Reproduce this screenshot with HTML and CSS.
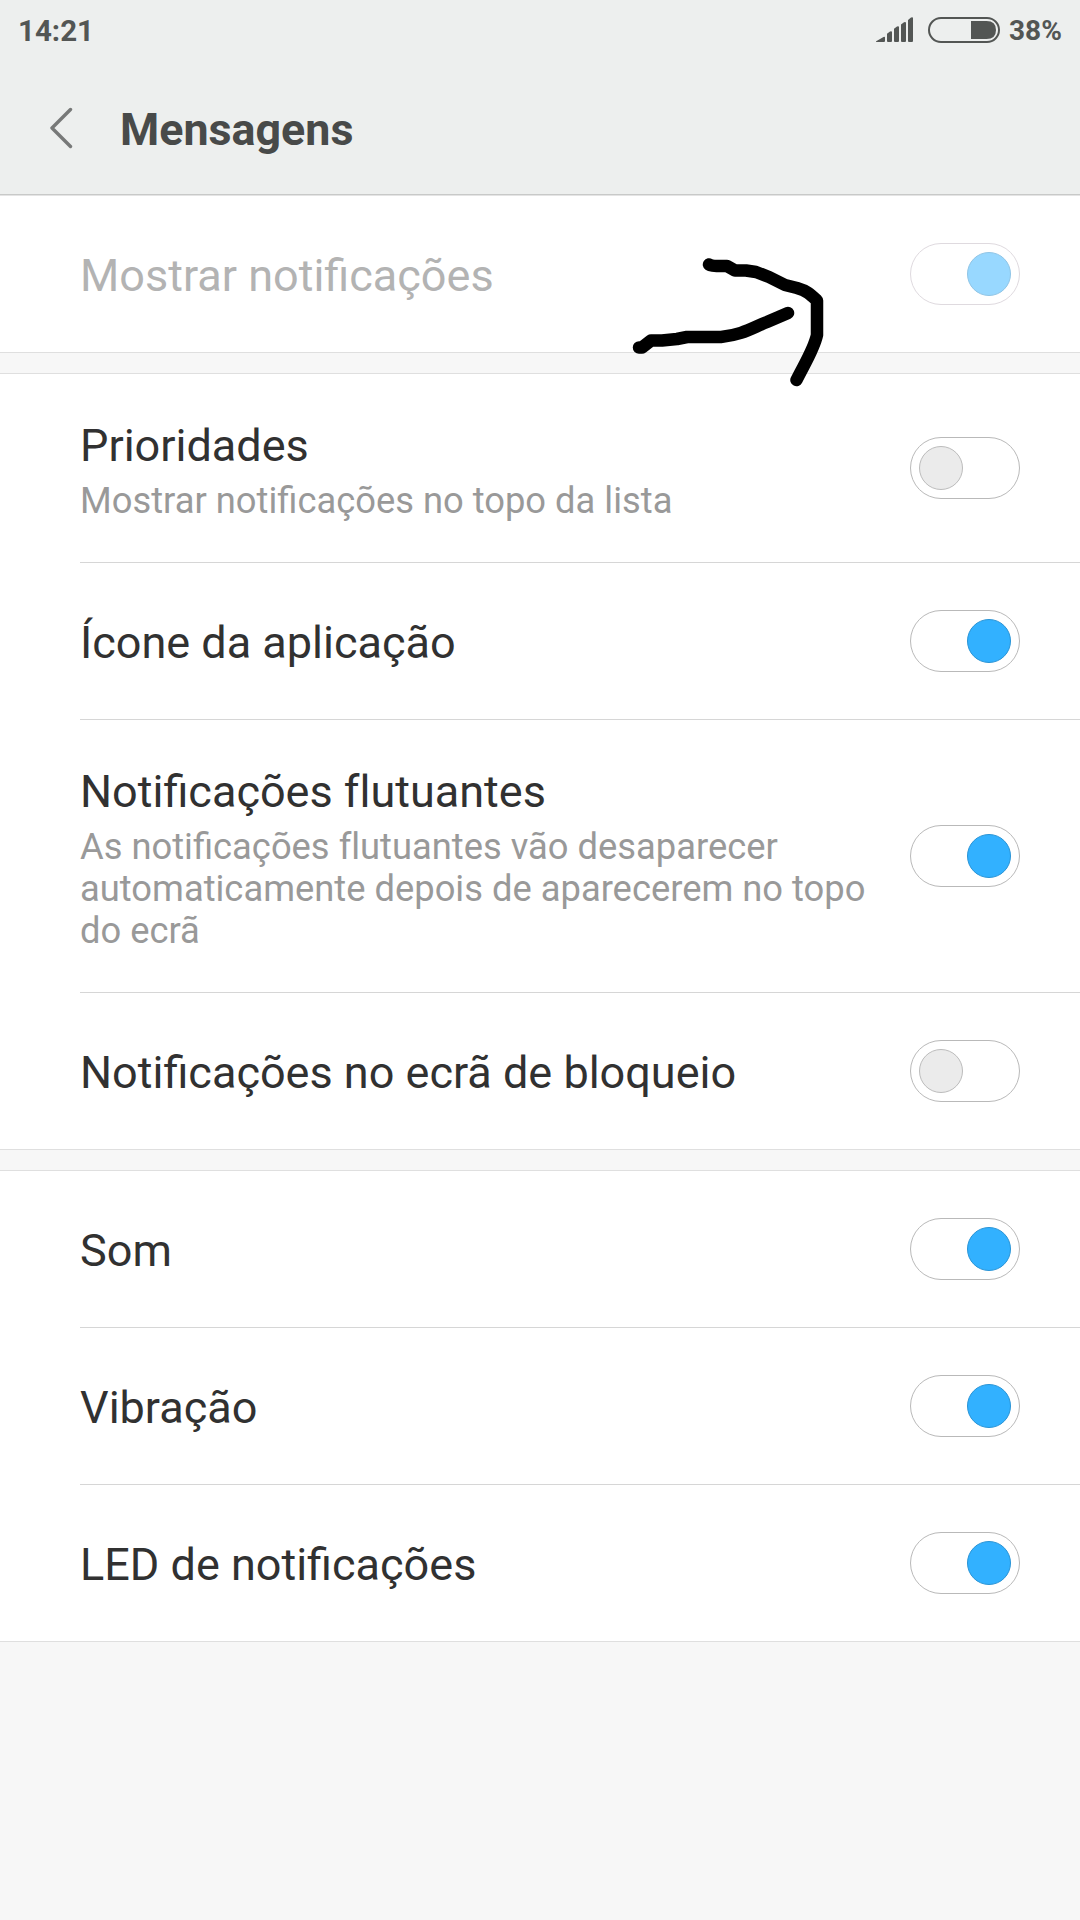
FILE: index.html
```html
<!DOCTYPE html>
<html lang="pt">
<head>
<meta charset="utf-8">
<title>Mensagens</title>
<link rel="stylesheet" href="styles.css">
</head>
<body>
<header class="header">
  <div class="status">
    <span class="clock">14:21</span>
    <svg class="signal" width="38" height="26" viewBox="0 0 38 26">
      <path d="M0 25C0 24.3 .3 24 1 23.700L7.500 20Q9 19.300 9 20.500V24Q9 25 8 25ZM11 16.800L14 14.600Q16 13.600 16 15.500V24Q16 25 15 25H12Q11 25 11 24ZM18 11.700L21 9.500Q23 8.500 23 10.500V24Q23 25 22 25H19Q18 25 18 24ZM25 7.500L28 5.300Q30 4.300 30 6.300V24Q30 25 29 25H26Q25 25 25 24ZM32 3L35 .6Q37-.6 37 1.500V24Q37 25 36 25H33Q32 25 32 24Z"/>
    </svg>
    <svg class="battery" width="72" height="26" viewBox="0 0 72 26">
      <rect class="shell" x="1" y="1" width="70" height="24" rx="12"/>
      <path d="M43 4H58.500Q68 4 68 13T58.500 22H43Z"/>
    </svg>
    <span class="percent">38%</span>
  </div>
  <div class="titlebar">
    <svg class="back" width="24" height="42" viewBox="0 0 24 42"><path d="M20.500 2.500L2 21L20.500 39.500"/></svg>
    <h1 class="title">Mensagens</h1>
  </div>
</header>
<main>
  <section class="group first">
    <div class="row disabled"><div class="label">Mostrar notificações</div><div class="switch on"><i class="thumb"></i></div></div>
    <svg class="arrow" width="220" height="160" viewBox="0 0 220 160">
      <path d="M89 28.500C92 30.500 101 30 107 30L115 34.500H126L136 36L149 41L165 49L177 52C187 55 190 58 197 64.500V99C194 113 185 127 176.500 144"/>
      <path d="M19 111.500H22L31 104.500L42 104.500L57 103L67 101H101C122 99 132 92 147 86L168 77"/>
    </svg>
  </section>
  <section class="group">
    <div class="row tall"><div class="label">Prioridades<p class="summary">Mostrar notificações no topo da lista</p></div><div class="switch"><i class="thumb"></i></div></div>
    <div class="row"><div class="label">Ícone da aplicação</div><div class="switch on"><i class="thumb"></i></div></div>
    <div class="row tall"><div class="label">Notificações f&zwnj;lutuantes<p class="summary">As notificações f&zwnj;lutuantes vão desaparecer automaticamente depois de aparecerem no topo do ecrã</p></div><div class="switch on"><i class="thumb"></i></div></div>
    <div class="row"><div class="label">Notificações no ecrã de bloqueio</div><div class="switch"><i class="thumb"></i></div></div>
  </section>
  <section class="group">
    <div class="row"><div class="label">Som</div><div class="switch on"><i class="thumb"></i></div></div>
    <div class="row"><div class="label">Vibração</div><div class="switch on"><i class="thumb"></i></div></div>
    <div class="row"><div class="label">LED de notificações</div><div class="switch on"><i class="thumb"></i></div></div>
  </section>
</main>
</body>
</html>
```
FILE: styles.css
```css
* { box-sizing: border-box; }
body {
  margin: 0;
  min-height: 1920px;
  background: #f7f7f7;
  font-family: Roboto, sans-serif;
  color: #313131;
}
.header {
  height: 196px;
  background: #edefee;
  border-bottom: 1px solid #e4e4e4;
  box-shadow: inset 0 -1px #c8c9c8;
}
.status {
  display: flex;
  align-items: center;
  height: 60px;
  padding: 0 17px 0 18px;
  font-size: 29.500px;
  font-weight: 700;
  color: #535654;
}
.clock { flex: 1; padding-top: 2px; }
.percent { width: 54px; padding-top: 1px; font-size: 28px; white-space: nowrap; }
.signal { fill: #535654; margin-right: 14px; }
.battery { fill: #535654; margin-right: 9px; }
.shell { fill: none; stroke: #535654; stroke-width: 2; }
.titlebar {
  display: flex;
  align-items: center;
  height: 136px;
  padding-left: 50px;
}
.back { fill: none; stroke: #777978; stroke-width: 3.400; stroke-linecap: round; stroke-linejoin: round; }
.title { margin: 2px 0 0 46px; font-size: 44.800px; font-weight: 700; color: #484a49; }
.group {
  margin-bottom: 20px;
  background: #fff;
  border-top: 1px solid #dfdfdf;
  border-bottom: 1px solid #dfdfdf;
}
.group.first { position: relative; border-top: 0; }
.row {
  display: flex;
  align-items: center;
  justify-content: space-between;
  height: 156px;
  margin-left: 80px;
  padding-right: 60px;
}
.row + .row { height: 157px; border-top: 1px solid #d6d6d6; }
.row.tall { height: auto; }
.label { width: 800px; padding-top: 4px; font-size: 45px; line-height: 54px; }
.tall .label { padding: 45px 0 40px; }
.summary { margin: 7px 0 0; font-size: 36.350px; line-height: 42px; color: #999; }
.switch {
  display: flex;
  width: 110px;
  height: 62px;
  padding: 8px;
  border: 1px solid #b9b9b9;
  border-radius: 31px;
}
.thumb {
  width: 44px;
  height: 44px;
  border: 1px solid #bcbcbc;
  border-radius: 50%;
  background: #ebebeb;
}
.on { justify-content: flex-end; }
.on .thumb { background: #32b1ff; border-color: #2994d6; }
.disabled .label { color: #b3b3b3; }
.disabled .switch { border-color: #dfdadf; }
.disabled .thumb { background: #98d8ff; border-color: #90c5e6; }
.arrow {
  position: absolute;
  left: 620px;
  top: 40px;
  z-index: 1;
  fill: none;
  stroke: #000;
  stroke-width: 12.500;
  stroke-linecap: round;
  stroke-linejoin: round;
}
```
